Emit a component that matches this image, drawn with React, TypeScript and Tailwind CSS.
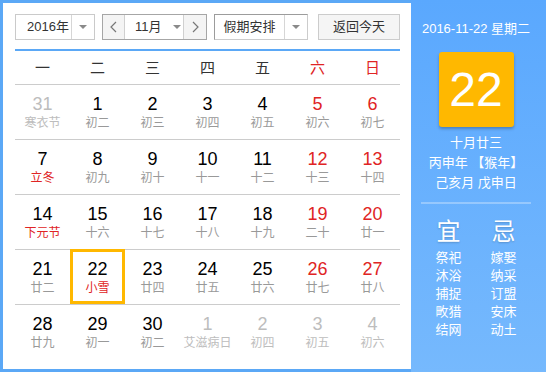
import React from 'react';

type Day = { n: number; l: string; muted?: boolean; fest?: boolean; sel?: boolean };

const rows: Day[][] = [
  [
    { n: 31, l: '寒衣节', muted: true },
    { n: 1, l: '初二' },
    { n: 2, l: '初三' },
    { n: 3, l: '初四' },
    { n: 4, l: '初五' },
    { n: 5, l: '初六' },
    { n: 6, l: '初七' },
  ],
  [
    { n: 7, l: '立冬', fest: true },
    { n: 8, l: '初九' },
    { n: 9, l: '初十' },
    { n: 10, l: '十一' },
    { n: 11, l: '十二' },
    { n: 12, l: '十三' },
    { n: 13, l: '十四' },
  ],
  [
    { n: 14, l: '下元节', fest: true },
    { n: 15, l: '十六' },
    { n: 16, l: '十七' },
    { n: 17, l: '十八' },
    { n: 18, l: '十九' },
    { n: 19, l: '二十' },
    { n: 20, l: '廿一' },
  ],
  [
    { n: 21, l: '廿二' },
    { n: 22, l: '小雪', fest: true, sel: true },
    { n: 23, l: '廿四' },
    { n: 24, l: '廿五' },
    { n: 25, l: '廿六' },
    { n: 26, l: '廿七' },
    { n: 27, l: '廿八' },
  ],
  [
    { n: 28, l: '廿九' },
    { n: 29, l: '初一' },
    { n: 30, l: '初二' },
    { n: 1, l: '艾滋病日', muted: true },
    { n: 2, l: '初四', muted: true },
    { n: 3, l: '初五', muted: true },
    { n: 4, l: '初六', muted: true },
  ],
];

const weekdays = ['一', '二', '三', '四', '五', '六', '日'];
const yi = ['祭祀', '沐浴', '捕捉', '畋猎', '结网'];
const ji = ['嫁娶', '纳采', '订盟', '安床', '动土'];

function Caret() {
  return <span className="block w-0 h-0 border-x-[4px] border-x-transparent border-t-[4px] border-t-[#8a8a8a]" />;
}

function Chevron({ dir }: { dir: 'l' | 'r' }) {
  return (
    <svg width="7" height="12" viewBox="0 0 7 12">
      <polyline
        points={dir === 'l' ? '6,1 1,6 6,11' : '1,1 6,6 1,11'}
        fill="none"
        stroke="#777"
        strokeWidth="1.2"
      />
    </svg>
  );
}

export default function App() {
  return (
    <div
      className="flex w-[546px] h-[372px] bg-white"
      style={{ fontFamily: '"Liberation Sans", "Noto Sans CJK SC", sans-serif' }}
    >
      {/* 左侧日历 */}
      <div className="w-[411px] h-full border-l-[3px] border-t-[3px] border-b-[3px] border-[#5ba8f6] pl-[12px] pt-[11px]">
        {/* 控件 */}
        <div className="flex items-stretch h-[26px] text-[13px] text-[#333] w-[385px]">
          <div className="flex w-[80px] border border-[#cacaca]">
            <div className="flex items-center w-[55px] pl-[11px]">2016年</div>
            <div className="flex flex-1 items-center justify-center border-l border-[#d6d6d6]">
              <Caret />
            </div>
          </div>
          <div className="flex ml-[7px] w-[105px] border border-[#a6a6a6]">
            <div className="flex w-[21px] items-center justify-center bg-[#f4f4f4]">
              <Chevron dir="l" />
            </div>
            <div className="flex w-[60px] items-center border-x border-[#d0d0d0] pl-[10px]">
              <span>11月</span>
              <span className="ml-[11px]">
                <Caret />
              </span>
            </div>
            <div className="flex flex-1 items-center justify-center bg-[#f4f4f4]">
              <Chevron dir="r" />
            </div>
          </div>
          <div className="flex ml-[7px] w-[94px] border border-[#cccccc] border-l-[#9c9c9c] border-t-[#9c9c9c]">
            <div className="flex w-[69px] items-center justify-center">假期安排</div>
            <div className="flex flex-1 items-center justify-center border-l border-[#d6d6d6]">
              <Caret />
            </div>
          </div>
          <div className="flex ml-[10px] w-[82px] items-center justify-center border border-[#cccccc] bg-[#f5f5f5]">
            返回今天
          </div>
        </div>

        <div className="mt-[9px] h-[2px] w-[385px] bg-[#5ba8f6]" />

        {/* 星期 */}
        <div className="grid grid-cols-7 w-[385px] h-[34px] border-b border-[#cccccc] text-[15px] leading-none">
          {weekdays.map((w, i) => (
            <div
              key={w}
              className={`flex items-center justify-center ${i >= 5 ? 'text-[#e02424]' : 'text-[#333]'}`}
            >
              {w}
            </div>
          ))}
        </div>

        {/* 日期 */}
        {rows.map((row, ri) => (
          <div
            key={ri}
            className={`grid grid-cols-7 w-[385px] h-[55px] ${ri < 4 ? 'border-b border-[#cccccc]' : ''}`}
          >
            {row.map((d, ci) => {
              const weekend = ci >= 5;
              const numColor = d.muted ? 'text-[#bdbdbd]' : weekend ? 'text-[#e02424]' : 'text-black';
              const lunColor = d.muted ? 'text-[#bdbdbd]' : d.fest ? 'text-[#e02424]' : 'text-[#999]';
              return (
                <div key={ci} className="relative flex flex-col items-center pt-[9px]">
                  {d.sel && (
                    <div className="absolute -top-px left-0 right-0 bottom-0 border-[3px] border-[#ffb800]" />
                  )}
                  <div className={`text-[18px] leading-[20px] ${numColor}`}>{d.n}</div>
                  <div className={`mt-[1px] text-[12px] leading-[16px] whitespace-nowrap ${lunColor}`}>{d.l}</div>
                </div>
              );
            })}
          </div>
        ))}
      </div>

      {/* 右侧详情 */}
      <div className="flex-1 h-[374px] bg-gradient-to-b from-[#5aa8fe] to-[#76b9fd] pr-[5px] text-white flex flex-col items-center">
        <div className="mt-[19px] text-[13px] leading-[20px]">2016-11-22 星期二</div>
        <div className="mt-[13px] flex h-[75px] w-[75px] items-center justify-center rounded-[3px] bg-[#ffb800] shadow-[0_2px_3px_rgba(0,0,0,0.25)]">
          <span className="text-[48px] leading-none">22</span>
        </div>
        <div className="mt-[6px] text-[13px] leading-[20px] text-center">
          <div>十月廿三</div>
          <div>丙申年 【猴年】</div>
          <div>己亥月 戊申日</div>
        </div>
        <div className="mt-[9px] h-[2px] w-[110px] bg-white/30" />
        <div className="grid grid-cols-2 w-[110px] mt-[14px] text-center">
          <div className="text-[24px] leading-[28px] [text-shadow:0_1px_2px_rgba(0,0,0,0.2)]">宜</div>
          <div className="text-[24px] leading-[28px] [text-shadow:0_1px_2px_rgba(0,0,0,0.2)]">忌</div>
          <div className="mt-[3px] text-[13px] leading-[18px]">
            {yi.map((t) => (
              <div key={t}>{t}</div>
            ))}
          </div>
          <div className="mt-[3px] text-[13px] leading-[18px]">
            {ji.map((t) => (
              <div key={t}>{t}</div>
            ))}
          </div>
        </div>
      </div>
    </div>
  );
}
